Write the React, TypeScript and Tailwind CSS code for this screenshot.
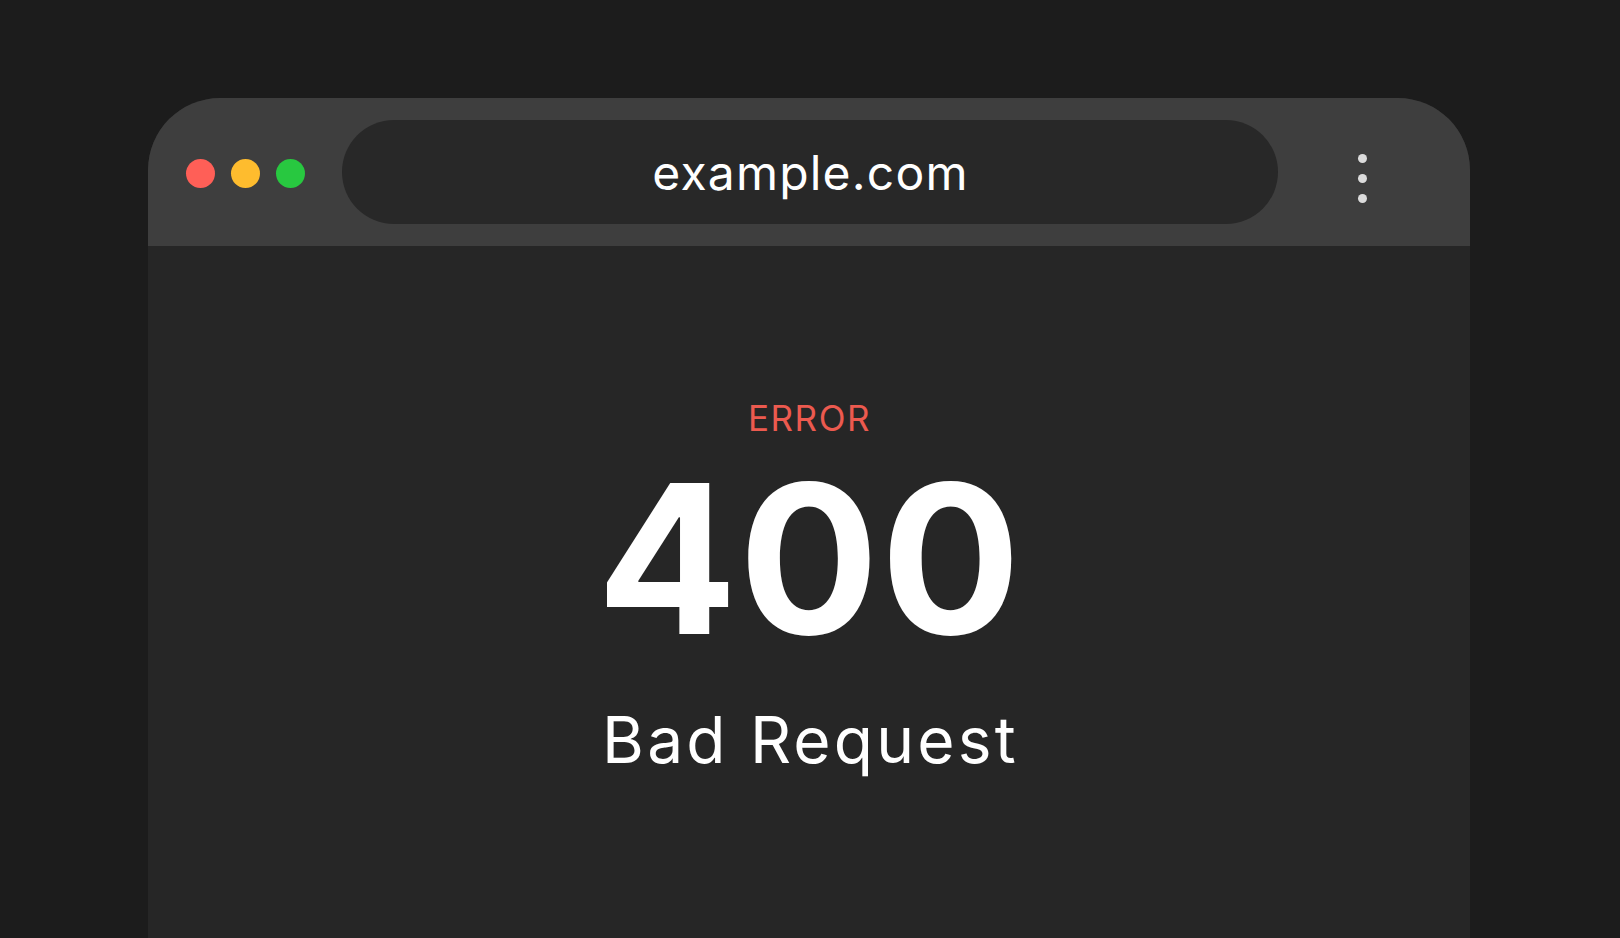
const TrafficLights = () => (
    <div className="flex items-center gap-[16px] mt-[3px]">
        <span className="block w-[29px] h-[29px] rounded-full bg-[#ff5f57]" />
        <span className="block w-[29px] h-[29px] rounded-full bg-[#febc2e]" />
        <span className="block w-[29px] h-[29px] rounded-full bg-[#28c840]" />
    </div>
);

const MenuDots = () => (
    <div className="flex flex-col items-center gap-[11px]">
        <span className="block w-[9px] h-[9px] rounded-full bg-[#dcdcdc]" />
        <span className="block w-[9px] h-[9px] rounded-full bg-[#dcdcdc]" />
        <span className="block w-[9px] h-[9px] rounded-full bg-[#dcdcdc]" />
    </div>
);

const App = () => {
    return (
        <div
            className="h-screen w-full overflow-hidden bg-[#1c1c1c] pt-[98px] pl-[148px]"
            style={{ fontFamily: 'Inter, "Noto Sans", sans-serif' }}
        >
            <div className="w-[1322px] h-[900px] rounded-t-[72px] overflow-hidden bg-[#262626] flex flex-col">
                {/* top bar */}
                <div className="h-[148px] bg-[#3e3e3e] flex items-center pl-[38px]">
                    <TrafficLights />
                    <div className="ml-[37px] w-[936px] h-[104px] rounded-full bg-[#282828] flex items-center justify-center">
                        <span className="mt-[1px] text-[48px] leading-none text-white tracking-[1.2px] pl-[1px]">example.com</span>
                    </div>
                    <div className="ml-[80px] mt-[12px]">
                        <MenuDots />
                    </div>
                </div>

                {/* page content */}
                <div className="flex flex-col items-center pt-[155px]">
                    <div className="text-[35px] leading-none text-[#ec5a4f] tracking-[1.5px] pl-[1px]">ERROR</div>
                    <div className="mt-[18px] text-[208px] leading-none font-bold text-white tracking-[1.5px] pl-[1px]">400</div>
                    <div className="mt-[46px] text-[64px] leading-none text-white tracking-[3.2px] pl-[3px]">Bad Request</div>
                </div>
            </div>
        </div>
    );
};

export default App;
